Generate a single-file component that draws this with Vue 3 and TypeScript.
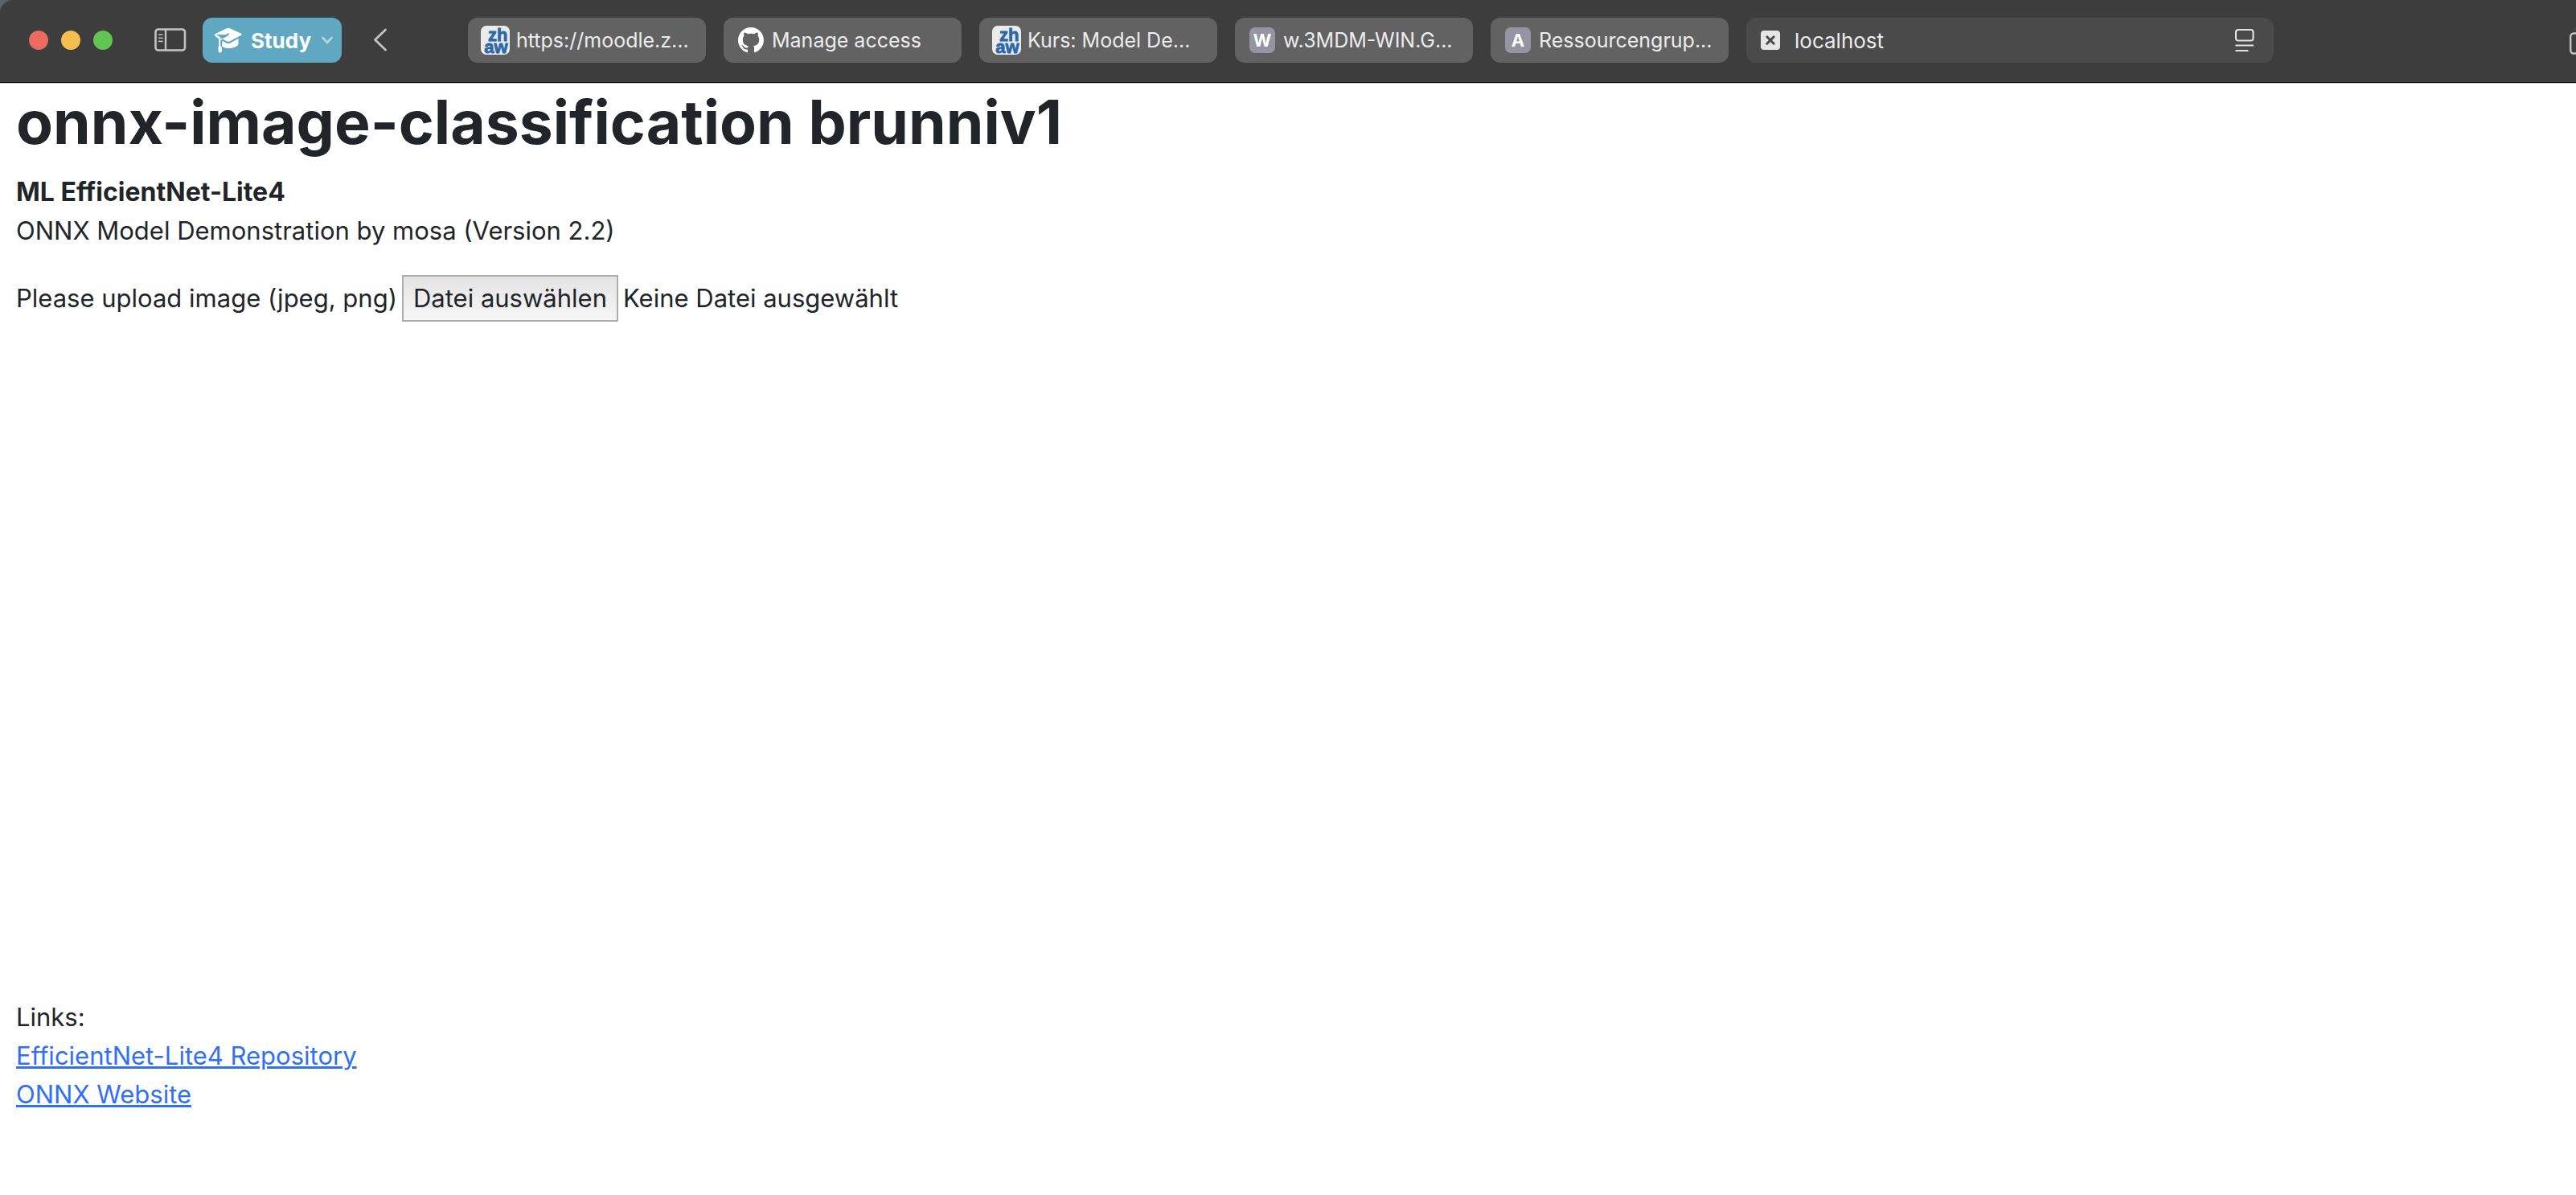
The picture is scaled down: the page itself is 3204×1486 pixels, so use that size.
<script setup lang="ts">
import { ref } from 'vue'

type Favicon = 'zhaw' | 'github' | 'letter'

interface Tab {
  title: string
  icon: Favicon
  letter?: string
}

const tabs: Tab[] = [
  { title: 'https://moodle.z...', icon: 'zhaw' },
  { title: 'Manage access', icon: 'github' },
  { title: 'Kurs: Model De...', icon: 'zhaw' },
  { title: 'w.3MDM-WIN.G...', icon: 'letter', letter: 'W' },
  { title: 'Ressourcengrup...', icon: 'letter', letter: 'A' },
]

const address = ref('localhost')
const fileInput = ref<HTMLInputElement | null>(null)
const fileName = ref('Keine Datei ausgewählt')

function openPicker(): void {
  fileInput.value?.click()
}

function onFileChange(event: Event): void {
  const file = (event.target as HTMLInputElement).files?.[0]
  fileName.value = file ? file.name : 'Keine Datei ausgewählt'
}
</script>

<template>
  <div class="window">
    <header class="toolbar">
      <div class="lights">
        <button class="light red" aria-label="Close"></button>
        <button class="light yellow" aria-label="Minimize"></button>
        <button class="light green" aria-label="Zoom"></button>
      </div>

      <button class="icon-button sidebar" aria-label="Sidebar">
        <svg width="40" height="30" viewBox="0 0 40 30" fill="none" stroke="#c3c3c3">
          <rect x="1.5" y="1.500" width="36.5" height="26" rx="3.5" stroke-width="2.6" />
          <path d="M14 2v26" stroke-width="2.4" />
          <path d="M5.5 8h4.5M5.5 12.2h4.5M5.5 16.4h4.5" stroke-width="1.6" stroke-linecap="round" />
        </svg>
      </button>

      <button class="profile">
        <svg width="36" height="34" viewBox="0 0 36 34">
          <path d="M1 9.500 16 2.300q2-.9 4 0L34 8.800q1.600.9 0 1.900L20.500 18q-2.500 1.300-5 0L10.500 15.300 19 10.800" fill="#fff" />
          <path d="M1.500 8.800 11 15.500 8 17 1.600 11.700Q0 10.500 1.500 8.800Z" fill="#fff" />
          <path d="M8 14.300 18.500 9" fill="none" stroke="#60a7c2" stroke-width="1.500" stroke-linecap="round" />
          <path d="M10.500 17.800 15.500 20.400q2.500 1.300 5 0L30.500 15v6q0 2-2 3.500-5 2.800-10 2.600-5 .2-8.500-2.600z" fill="#fff" />
          <path d="M6.200 15.500 8.200 14.500v9.500q1.700 1 1.700 3.300v3q0 2.200-2.200 2.200t-2.200-2.200v-3q0-2.300.7-3.300z" fill="#fff" />
        </svg>
        <span>Study</span>
        <svg class="caret" width="16" height="12" viewBox="0 0 16 12" fill="none" stroke="#b4d5e2" stroke-width="2.600" stroke-linecap="round" stroke-linejoin="round">
          <path d="m2.500 3 5.500 6 5.500-6" />
        </svg>
      </button>

      <button class="icon-button back" aria-label="Back">
        <svg width="18" height="30" viewBox="0 0 18 30" fill="none" stroke="#c3c3c3" stroke-width="2.800" stroke-linecap="round" stroke-linejoin="round">
          <path d="M15.500 2 2.500 14.500l13 12.500" />
        </svg>
      </button>

      <nav class="tabs">
        <button v-for="tab in tabs" :key="tab.title" class="tab">
          <svg v-if="tab.icon === 'zhaw'" class="zhaw" width="36" height="36" viewBox="0 0 36 36">
            <rect width="36" height="36" rx="7" fill="#ebebeb" />
            <text text-anchor="end" fill="#2b67ab" stroke="#2b67ab" stroke-width=".8"><tspan x="33.500" y="19">zh</tspan><tspan x="33.500" y="33.500">aw</tspan></text>
          </svg>
          <svg v-else-if="tab.icon === 'github'" class="github" width="32" height="32" viewBox="0 0 16 16" fill="#fff">
            <path d="M8 0C3.580 0 0 3.580 0 8c0 3.540 2.290 6.530 5.470 7.590.4.070.55-.17.55-.38 0-.19-.01-.82-.01-1.490-2.010.37-2.530-.49-2.690-.94-.09-.23-.48-.94-.82-1.130-.28-.15-.68-.52-.01-.53.63-.01 1.080.58 1.230.82.72 1.210 1.870.87 2.330.66.07-.52.28-.87.51-1.070-1.780-.2-3.640-.89-3.640-3.950 0-.87.31-1.590.82-2.150-.08-.2-.36-1.020.08-2.120 0 0 .67-.21 2.200.82.64-.18 1.320-.27 2-.27s1.360.09 2 .27c1.530-1.040 2.200-.82 2.200-.82.44 1.100.16 1.920.08 2.120.51.56.82 1.270.82 2.150 0 3.070-1.870 3.750-3.650 3.950.29.25.54.73.54 1.480 0 1.070-.01 1.930-.01 2.200 0 .21.15.46.55.38A8.010 8.010 0 0 0 16 8c0-4.420-3.580-8-8-8z" />
          </svg>
          <span v-else class="letter">{{ tab.letter }}</span>
          <span class="title">{{ tab.title }}</span>
        </button>

        <div class="address">
          <svg width="24" height="24" viewBox="0 0 24 24">
            <rect width="24" height="24" rx="4" fill="#e6e6e6" />
            <path d="m7.800 7.800 8.400 8.400m0-8.400-8.400 8.400" stroke="#4a4a4a" stroke-width="3" stroke-linecap="round" />
          </svg>
          <input v-model="address" type="text" aria-label="Address" />
          <svg width="24" height="30" viewBox="0 0 24 30" fill="none" stroke="#e2e2e2" stroke-width="2">
            <rect x="1" y="2" width="21.500" height="13.500" rx="3" />
            <path d="M.5 21.500h22.500M.5 28h16" />
          </svg>
        </div>
      </nav>

      <button class="icon-button overview" aria-label="Tab overview">
        <svg width="8" height="38" viewBox="0 0 8 38" fill="none" stroke="#c3c3c3" stroke-width="2.400">
          <rect x="1.200" y="10.500" width="24" height="25" rx="4" />
          <path d="M7.500 6v-1" stroke="#666" stroke-width="1" />
        </svg>
      </button>
    </header>

    <main class="page">
      <h1>onnx-image-classification brunniv1</h1>
      <p class="intro">
        <strong>ML EfficientNet-Lite4</strong><br />
        ONNX Model Demonstration by mosa (Version 2.2)
      </p>
      <form class="upload" @submit.prevent>
        <label for="image">Please upload image (jpeg, png)</label>
        <input id="image" ref="fileInput" class="file" type="file" accept="image/jpeg,image/png" tabindex="-1" @change="onFileChange" />
        <button type="button" class="choose" @click="openPicker">Datei auswählen</button>
        <output for="image">{{ fileName }}</output>
      </form>
      <section class="result"></section>
      <footer class="links">
        <div>Links:</div>
        <div><a href="#repository">EfficientNet-Lite4 Repository</a></div>
        <div><a href="#onnx">ONNX Website</a></div>
      </footer>
    </main>
  </div>
</template>

<style>
body {
  background: #fff;
}
</style>

<style scoped>
.window {
  font-family: Inter, "Liberation Sans", sans-serif;
  color: #212529;
  overflow: hidden;
  background: #59616b;
}

button,
input {
  font: inherit;
  color: inherit;
  margin: 0;
  padding: 0;
  border: 0;
  background: none;
}

svg {
  display: block;
  flex: none;
}

.toolbar {
  display: flex;
  align-items: center;
  box-sizing: border-box;
  height: 104px;
  padding: 0 0 3px 36px;
  background: #3d3d3d;
  border-bottom: 1px solid #c8c8c8;
  box-shadow: inset 0 -1px #000;
  border-top-left-radius: 16px;
}

.lights {
  display: flex;
  flex: none;
  gap: 16px;
}

.light {
  width: 24px;
  height: 24px;
  border-radius: 50%;
}

.red { background: #ec6a5e; }
.yellow { background: #f4bf4f; }
.green { background: #61c554; }

.icon-button {
  flex: none;
}

.sidebar {
  margin: 0 20px 0 52px;
}

.profile {
  display: flex;
  flex: none;
  align-items: center;
  box-sizing: border-box;
  width: 173px;
  height: 56px;
  padding: 0 10px 0 14px;
  border-radius: 12px;
  background: #60a7c2;
  color: #fff;
  font-size: 26px;
  font-weight: 700;
}

.profile span {
  margin: 0 auto 0 10px;
}

.back {
  margin: 0 100px 0 39px;
}

.tabs {
  display: flex;
  flex: 0 1 2246px;
  gap: 22px;
  min-width: 0;
}

.tab,
.address {
  display: flex;
  align-items: center;
  box-sizing: border-box;
  height: 56px;
  border-radius: 12px;
}

.tab {
  flex: 0 1 296px;
  min-width: 0;
  padding: 0 16px;
  background: #626262;
  color: #ececec;
  font-size: 25px;
}

.title {
  overflow: hidden;
  white-space: nowrap;
  margin-left: 10px;
}

.zhaw {
  overflow: visible;
  font: 700 22px "Liberation Sans", sans-serif;
}

.zhaw + .title {
  margin-left: 8px;
}

.github,
.letter {
  margin-left: 2px;
}

.letter {
  flex: none;
  width: 32px;
  height: 32px;
  border-radius: 7px;
  background: #9494a2;
  color: #fff;
  font-size: 22px;
  font-weight: 700;
  line-height: 32px;
  text-align: center;
}

.address {
  flex: 0 1 656px;
  min-width: 0;
  padding: 0 24px 0 18px;
  background: #4a4a4a;
  color: #ececec;
  font-size: 26px;
}

.address input {
  flex: 1;
  min-width: 0;
  margin: 0 18px;
  outline: none;
}

.overview {
  margin-left: auto;
}

.page {
  padding: 0 20px 96px;
  background: #fff;
  font-size: 31px;
  line-height: 48px;
}

h1 {
  margin: 0 0 15px;
  font-size: 75px;
  font-weight: 700;
  line-height: 96px;
}

.intro {
  margin: 0 0 31px;
}

strong {
  font-size: 32px;
}

.upload {
  display: flex;
  align-items: center;
  gap: 6px;
}

.file {
  position: absolute;
  width: 1px;
  height: 1px;
  opacity: 0;
}

.choose {
  padding: 3px 12px;
  border: 2px solid #adadad;
  background: linear-gradient(#e4e4e4, #f6f6f6);
}

.result {
  min-height: 841px;
}

a {
  color: #316ff6;
  text-decoration: underline;
}
</style>
